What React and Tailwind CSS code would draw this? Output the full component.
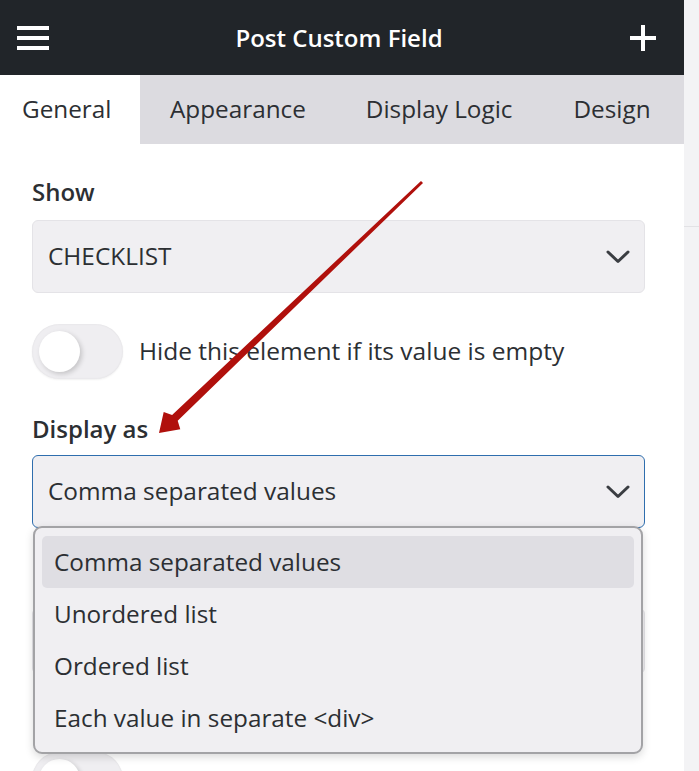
const font = { fontFamily: "'Open Sans', 'Noto Sans', sans-serif" };

function Chevron() {
  return (
    <svg width="24" height="14" viewBox="0 0 24 14" className="shrink-0">
      <polyline points="2,2 12,11.5 22,2" fill="none" stroke="#3a3d42" strokeWidth="3" strokeLinecap="round" strokeLinejoin="round" />
    </svg>
  );
}

function Toggle() {
  return (
    <div className="relative w-[91px] h-[55px] rounded-full bg-[#efeef1] shadow-[inset_0_0_2px_rgba(0,0,0,0.08),0_1px_2px_rgba(0,0,0,0.06)] shrink-0">
      <div className="absolute left-[7px] top-[7px] w-[41px] h-[41px] rounded-full bg-white shadow-[2px_2px_5px_rgba(0,0,0,0.18)]" />
    </div>
  );
}

function Select({ value, focused }) {
  return (
    <div
      className={
        "flex items-center justify-between h-[73px] rounded-[6px] bg-[#f0eff2] pl-[15px] pr-[14px] " +
        (focused ? "border border-[#2f6eae]" : "border border-[#e4e3e7]")
      }
    >
      <span className="text-[24.4px] text-[#2c2f33]">{value}</span>
      <Chevron />
    </div>
  );
}

export default function App() {
  const options = [
    "Comma separated values",
    "Unordered list",
    "Ordered list",
    "Each value in separate <div>",
  ];

  return (
    <div className="relative w-[699px] h-[771px] overflow-hidden bg-[#f3f3f5] flex" style={font}>
      {/* Panel */}
      <div className="w-[684px] h-full bg-white flex flex-col">
        {/* Header */}
        <div className="h-[75px] shrink-0 bg-[#212529] flex items-center justify-between pl-[17px] pr-[27px]">
          <div className="flex flex-col gap-[6px]">
            <span className="block w-[32px] h-[4px] bg-white" />
            <span className="block w-[32px] h-[4px] bg-white" />
            <span className="block w-[32px] h-[4px] bg-white" />
          </div>
          <h1 className="text-white text-[24px] font-semibold">Post Custom Field</h1>
          <svg width="28" height="28" viewBox="0 0 28 28">
            <rect x="12" y="1" width="4" height="26" fill="#fff" />
            <rect x="1" y="12" width="26" height="4" fill="#fff" />
          </svg>
        </div>

        {/* Tabs */}
        <div className="h-[69px] shrink-0 bg-[#dcdbe0] flex text-[24.3px] text-[#2c2f33]">
          <div className="bg-white h-full flex items-center pl-[22px] w-[140px]">General</div>
          <div className="h-full flex items-center pl-[30px] pr-[30px]">Appearance</div>
          <div className="h-full flex items-center pl-[30px] pr-[30px]">Display Logic</div>
          <div className="h-full flex items-center pl-[31px]">Design</div>
        </div>

        {/* Body */}
        <div className="pl-[32px] pr-[39px] pt-[30px] flex flex-col">
          <label className="text-[24px] font-semibold text-[#2c2f33] leading-[36px]">Show</label>
          <div className="mt-[10px]">
            <Select value="CHECKLIST" />
          </div>

          <div className="mt-[31px] flex items-center gap-[16px]">
            <Toggle />
            <span className="text-[24.5px] text-[#2c2f33]">Hide this element if its value is empty</span>
          </div>

          <label className="mt-[32px] text-[24px] font-semibold text-[#2c2f33] leading-[36px]">Display as</label>
          <div className="mt-[8px] relative">
            <Select value="Comma separated values" focused />

            {/* Open dropdown */}
            <div className="absolute left-[1px] top-[71px] w-[610px] h-[228px] rounded-[9px] border-2 border-[#a3a3a6] bg-[#f0eff2] shadow-[0_3px_8px_rgba(0,0,0,0.15)] px-[7px] pt-[8px] z-10">
              {options.map((o, i) => (
                <div
                  key={o}
                  className={
                    "h-[52px] flex items-center pl-[12px] rounded-[5px] text-[24.3px] text-[#2c2f33] " +
                    (i === 0 ? "bg-[#dfdee3]" : "")
                  }
                >
                  {o}
                </div>
              ))}
            </div>
          </div>

          {/* Hidden controls beneath dropdown */}
          <div className="mt-[80px] h-[66px] rounded-[6px] bg-[#f0eff2] border border-[#e4e3e7]" />
          <div className="mt-[78px]">
            <Toggle />
          </div>
        </div>
      </div>

      {/* Right strip */}
      <div className="flex-1 flex flex-col">
        <div className="h-[227px] border-b border-[#e2e2e5]" />
      </div>

      {/* Annotation arrow */}
      <svg className="absolute left-0 top-0 pointer-events-none z-20" width="699" height="771">
        <polygon
          points="159,433 163.7,411.9 172.1,414.9 421,181 423,183 177.7,420.7 180.3,429.3"
          fill="#b0100c"
        />
      </svg>
    </div>
  );
}
